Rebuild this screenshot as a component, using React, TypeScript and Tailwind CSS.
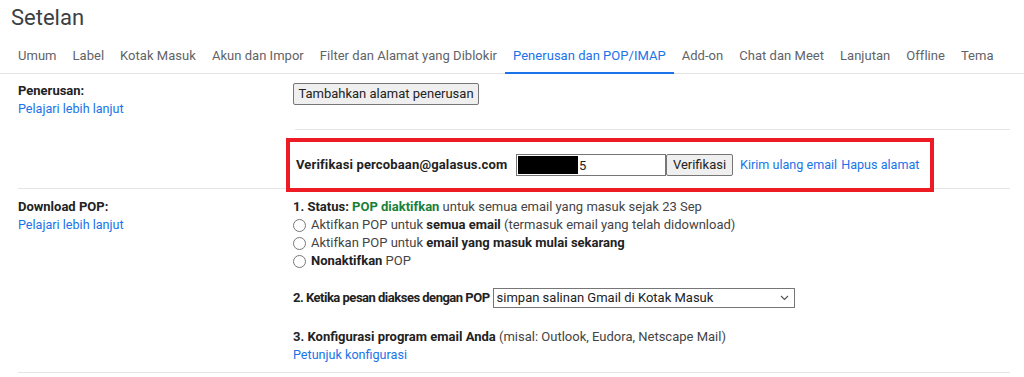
import React from "react";

const tabs = [
  "Umum",
  "Label",
  "Kotak Masuk",
  "Akun dan Impor",
  "Filter dan Alamat yang Diblokir",
  "Penerusan dan POP/IMAP",
  "Add-on",
  "Chat dan Meet",
  "Lanjutan",
  "Offline",
  "Tema",
];

function Radio({ children }: { children: React.ReactNode }) {
  return (
    <label className="flex items-center h-[18px] text-[#444]">
      <span className="w-[13px] h-[13px] rounded-full border border-[#777] mr-[5px] shrink-0" />
      <span>{children}</span>
    </label>
  );
}

export default function App() {
  return (
    <div className="w-[1024px] h-[377px] overflow-hidden bg-white font-['Roboto',sans-serif] text-[13px] text-[#222]">
      {/* title */}
      <h1 className="h-[32px] pl-[11px] pt-[4px] text-[22px] leading-[28px] text-[#3c4043]">
        Setelan
      </h1>

      {/* tabs */}
      <nav className="flex h-[42px] pl-[10px] border-b border-[#e3e3e3] text-[13px] tracking-[0.03px]">
        {tabs.map((t) => {
          const active = t === "Penerusan dan POP/IMAP";
          return (
            <div
              key={t}
              className={
                "relative px-2 pt-[16px] leading-[16px] whitespace-nowrap " +
                (active ? "text-[#1a73e8]" : "text-[#5f6368]")
              }
            >
              {t}
              {active && (
                <span className="absolute left-0 right-0 bottom-[-1px] h-[2px] bg-[#1a73e8]" />
              )}
            </div>
          );
        })}
      </nav>

      {/* Penerusan */}
      <section className="ml-[18px] mr-[14px] flex border-b border-[#e5e5e5]">
        <div className="w-[275px] pt-[8px] leading-[18px]">
          <div className="font-bold text-[#222]">Penerusan:</div>
          <a className="text-[12.6px] text-[#1a73e8]">Pelajari lebih lanjut</a>
        </div>
        <div className="flex-1 pt-[9px]">
          <button className="h-[22px] w-[186px] border border-[#767676] bg-[#efefef] rounded-[2px] text-[#222]">
            Tambahkan alamat penerusan
          </button>
          <div className="mt-[24px] ml-[2px] border-t border-[#e5e5e5]" />
          <div className="relative z-10 mt-[8px] -ml-[7px] -mb-[4px] w-[648px] h-[54px] border-4 border-[#ed1c24] flex items-center pl-[6px] bg-white">
            <span className="w-[220px] font-bold text-[#222] whitespace-nowrap tracking-[0.15px]">
              Verifikasi percobaan@galasus.com
            </span>
            <div className="relative">
              <input
                readOnly
                value="5"
                className="w-[150px] h-[22px] border border-[#767676] pl-[62px] text-[#222] outline-none"
              />
              <span className="absolute left-[2px] top-[2px] w-[60px] h-[18px] bg-black" />
            </div>
            <button className="h-[22px] w-[67px] border border-[#767676] bg-[#efefef] rounded-[2px] text-[#222]">
              Verifikasi
            </button>
            <a className="ml-[7px] text-[12.6px] text-[#1a73e8]">Kirim ulang email</a>
            <a className="ml-[4px] text-[12.6px] text-[#1a73e8]">Hapus alamat</a>
          </div>
        </div>
      </section>

      {/* Download POP */}
      <section className="ml-[18px] mr-[14px] flex border-b border-[#e5e5e5]">
        <div className="w-[275px] pt-[9px] leading-[18px]">
          <div className="font-bold text-[#222]">Download POP:</div>
          <a className="text-[12.6px] text-[#1a73e8]">Pelajari lebih lanjut</a>
        </div>
        <div className="flex-1 pt-[9px] pb-[8px] leading-[18px]">
          <div className="text-[#444]">
            <span className="font-bold text-[#222]">1. Status: </span>
            <span className="font-bold text-[#188038]">POP diaktifkan</span> untuk semua email yang
            masuk sejak 23 Sep
          </div>
          <Radio>
            Aktifkan POP untuk <b className="text-[#222]">semua email</b> (termasuk email yang telah
            didownload)
          </Radio>
          <Radio>
            Aktifkan POP untuk <b className="text-[#222]">email yang masuk mulai sekarang</b>
          </Radio>
          <Radio>
            <b className="text-[#222]">Nonaktifkan</b> POP
          </Radio>

          <div className="mt-[18px] h-[20px] flex items-center">
            <span className="font-bold text-[#222] mr-[3px] whitespace-nowrap tracking-[-0.5px]">
              2. Ketika pesan diakses dengan POP
            </span>
            <div className="w-[302px] h-[20px] border border-[#767676] flex items-center justify-between pl-[3px] pr-[5px] text-[#222]">
              <span>simpan salinan Gmail di Kotak Masuk</span>
              <svg width="9" height="6" viewBox="0 0 9 6" fill="none">
                <path d="M1 1l3.5 3.5L8 1" stroke="#555" strokeWidth="1.2" />
              </svg>
            </div>
          </div>

          <div className="mt-[20px] text-[#444]">
            <span className="font-bold text-[#222]">3. Konfigurasi program email Anda</span> (misal:
            Outlook, Eudora, Netscape Mail)
          </div>
          <a className="block text-[12.6px] text-[#1a73e8]">Petunjuk konfigurasi</a>
        </div>
      </section>
    </div>
  );
}
